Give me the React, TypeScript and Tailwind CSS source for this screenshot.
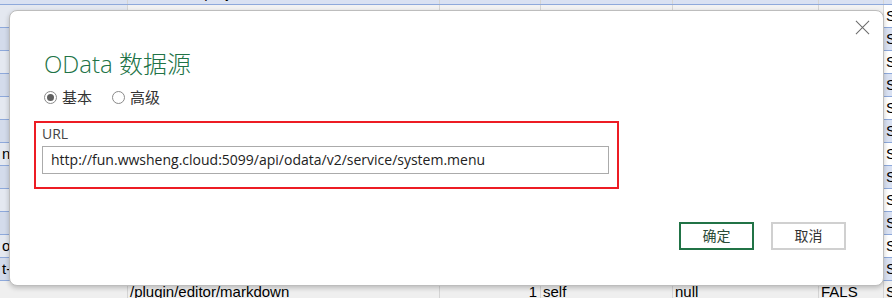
import React from "react";

const cols = [128, 312, 101, 132, 146, 65, 40];

const ui = { fontFamily: '"Open Sans", "Noto Sans CJK SC", sans-serif' };
const cell = { fontFamily: '"Liberation Sans", "Noto Sans CJK SC", sans-serif' };

function SheetRow({ texts, bg, line }: { texts: string[]; bg: string[]; line: string }) {
  return (
    <div className={`flex h-[23px] shrink-0 border-b ${line}`} style={cell}>
      {cols.map((w, i) => (
        <div
          key={i}
          className={`h-full shrink-0 overflow-hidden whitespace-nowrap border-r border-[#d4d4d4] px-[2px] text-[15px] leading-[22px] text-black ${bg[i]} ${
            i === 2 ? "pr-[3px] text-right" : ""
          }`}
          style={{ width: w }}
        >
          {texts[i]}
        </div>
      ))}
    </div>
  );
}

function Radio({ checked, label }: { checked?: boolean; label: string }) {
  return (
    <label className="flex items-center gap-[5px] text-[15px] text-[#333]">
      <span className="flex h-[13px] w-[13px] items-center justify-center rounded-full border border-[#8a8a8a] bg-white">
        {checked && <span className="h-[7px] w-[7px] rounded-full bg-[#606060]" />}
      </span>
      <span>{label}</span>
    </label>
  );
}

const leftText: Record<number, string> = { 6: "na", 10: "or", 11: "t-" };

export default function App() {
  const rows = Array.from({ length: 12 }, (_, i) => i);

  return (
    <div className="relative h-[298px] w-[892px] overflow-hidden bg-white">
      <div className="mt-[-18px] flex flex-col">
        <SheetRow
          texts={["", "/document/project-link", "1", "self", "null", "FALS", "S"]}
          bg={Array(7).fill("bg-[#d9e1f2]")}
          line="border-[#8ea9db]"
        />
        {rows.map((r) => (
          <SheetRow
            key={r}
            texts={[leftText[r] || "", "", "", "", "", "", "S"]}
            bg={[
              r % 2 ? "bg-[#d3dbeb]" : "bg-[#e4e8f0]",
              "bg-[#f2f2f2]",
              "bg-[#f2f2f2]",
              "bg-[#f2f2f2]",
              "bg-[#f2f2f2]",
              "bg-[#f2f2f2]",
              r % 2 ? "bg-[#d9e1f2]" : "bg-white",
            ]}
            line="border-[#8ea9db]"
          />
        ))}
        <SheetRow
          texts={["", "/plugin/editor/markdown", "1", "self", "null", "FALS", "S"]}
          bg={Array(7).fill("bg-[#efefef]")}
          line="border-[#d4d4d4]"
        />
      </div>

      {/* dialog */}
      <div
        className="absolute left-[9px] top-[10px] flex h-[276px] w-[875px] flex-col rounded-[8px] border border-[#bdbdbd] bg-white pl-[24px] shadow-[0_2px_5px_rgba(0,0,0,0.22)]"
        style={ui}
      >
        <button className="absolute right-[13px] top-[9px] h-[15px] w-[15px] text-[#6b6b6b]" title="Close">
          <svg viewBox="0 0 16 16" className="h-full w-full" fill="none" stroke="currentColor" strokeWidth="1.1">
            <path d="M1 1 L15 15 M15 1 L1 15" />
          </svg>
        </button>

        <h1 className="ml-[10px] mt-[37px] text-[24px] font-light leading-[32px] text-[#217346]">OData 数据源</h1>

        <div className="ml-[10px] mt-[6px] flex items-center gap-[20px]">
          <Radio checked label="基本" />
          <Radio label="高级" />
        </div>

        <div className="mt-[12px] flex h-[68px] w-[585px] flex-col border-2 border-[#ed1c24] pl-[6px] pt-[1px]">
          <div className="text-[14px] leading-[19px] text-[#444]">URL</div>
          <div className="mt-[3px] flex h-[28px] w-[567px] items-center border border-[#ababab] px-[8px] text-[14px] text-[#222]">
            http://fun.wwsheng.cloud:5099/api/odata/v2/service/system.menu
          </div>
        </div>

        <div className="mt-[33px] flex justify-end gap-[17px] pr-[37px]">
          <button className="h-[28px] w-[75px] border-2 border-[#217346] text-[14px] text-[#2b4a38]">确定</button>
          <button className="h-[28px] w-[75px] border-2 border-[#d0d0d0] text-[14px] text-[#333]">取消</button>
        </div>
      </div>
    </div>
  );
}
